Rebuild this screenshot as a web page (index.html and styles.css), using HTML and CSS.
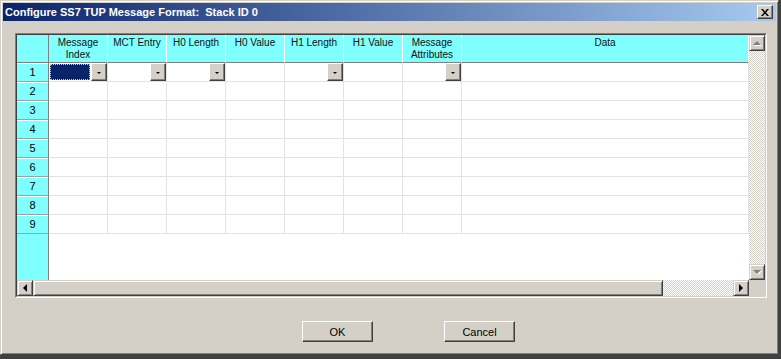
FILE: index.html
```html
<!DOCTYPE html>
<html lang="en">
<head>
    <meta charset="UTF-8">
    <title>Configure SS7 TUP Message Format</title>
    <link rel="stylesheet" href="styles.css">
</head>
<body>
    <div class="window">
        <div class="titlebar">
            <span class="title">Configure SS7 TUP Message Format:&nbsp; Stack ID 0</span>
            <div class="close-btn">
                <svg width="8" height="7" viewBox="0 0 8 7"><path d="M0 0h2l2 2.5L6 0h2L5 3.5 8 7H6L4 4.5 2 7H0l3-3.5z" fill="#000"/></svg>
            </div>
        </div>
        <div class="client">
            <div class="grid-frame">
                <div class="grid-main">
                    <div class="sheet">
                        <div class="hcell corner"></div>
                        <div class="hcell">Message<br>Index</div>
                        <div class="hcell">MCT Entry</div>
                        <div class="hcell">H0 Length</div>
                        <div class="hcell">H0 Value</div>
                        <div class="hcell">H1 Length</div>
                        <div class="hcell">H1 Value</div>
                        <div class="hcell">Message<br>Attributes</div>
                        <div class="hcell">Data</div>

                        <div class="rhead">1</div>
                        <div class="cell combo"><span class="selected"></span><span class="drop"></span></div>
                        <div class="cell combo"><span class="drop"></span></div>
                        <div class="cell combo"><span class="drop"></span></div>
                        <div class="cell"></div>
                        <div class="cell combo"><span class="drop"></span></div>
                        <div class="cell"></div>
                        <div class="cell combo"><span class="drop"></span></div>
                        <div class="cell"></div>

                        <div class="rhead">2</div>
                        <div class="cell"></div><div class="cell"></div><div class="cell"></div><div class="cell"></div>
                        <div class="cell"></div><div class="cell"></div><div class="cell"></div><div class="cell"></div>

                        <div class="rhead">3</div>
                        <div class="cell"></div><div class="cell"></div><div class="cell"></div><div class="cell"></div>
                        <div class="cell"></div><div class="cell"></div><div class="cell"></div><div class="cell"></div>

                        <div class="rhead">4</div>
                        <div class="cell"></div><div class="cell"></div><div class="cell"></div><div class="cell"></div>
                        <div class="cell"></div><div class="cell"></div><div class="cell"></div><div class="cell"></div>

                        <div class="rhead">5</div>
                        <div class="cell"></div><div class="cell"></div><div class="cell"></div><div class="cell"></div>
                        <div class="cell"></div><div class="cell"></div><div class="cell"></div><div class="cell"></div>

                        <div class="rhead">6</div>
                        <div class="cell"></div><div class="cell"></div><div class="cell"></div><div class="cell"></div>
                        <div class="cell"></div><div class="cell"></div><div class="cell"></div><div class="cell"></div>

                        <div class="rhead">7</div>
                        <div class="cell"></div><div class="cell"></div><div class="cell"></div><div class="cell"></div>
                        <div class="cell"></div><div class="cell"></div><div class="cell"></div><div class="cell"></div>

                        <div class="rhead">8</div>
                        <div class="cell"></div><div class="cell"></div><div class="cell"></div><div class="cell"></div>
                        <div class="cell"></div><div class="cell"></div><div class="cell"></div><div class="cell"></div>

                        <div class="rhead">9</div>
                        <div class="cell"></div><div class="cell"></div><div class="cell"></div><div class="cell"></div>
                        <div class="cell"></div><div class="cell"></div><div class="cell"></div><div class="cell"></div>

                        <div class="rhead filler"></div>
                        <div class="empty"></div>
                    </div>
                    <div class="vscroll">
                        <div class="sbtn"><span class="arrow up"></span></div>
                        <div class="track"></div>
                        <div class="sbtn"><span class="arrow down"></span></div>
                    </div>
                </div>
                <div class="hscroll">
                    <div class="sbtn"><span class="arrow left"></span></div>
                    <div class="thumb"></div>
                    <div class="track"></div>
                    <div class="sbtn"><span class="arrow right"></span></div>
                    <div class="sizer"></div>
                </div>
            </div>
            <div class="actions">
                <div class="btn">OK</div>
                <div class="btn">Cancel</div>
            </div>
        </div>
    </div>
</body>
</html>
```

FILE: styles.css
```css
body {
    margin: 0;
    background: #404040;
    font-family: 'Liberation Sans', Arial, sans-serif;
    font-size: 11px;
    color: #000;
}
.window {
    width: 779px;
    height: 355px;
    box-sizing: border-box;
    padding: 2px;
    background: #d4d0c8;
    border-top: 1px solid #d4d0c8;
    border-left: 1px solid #d4d0c8;
    border-right: 1px solid #404040;
    border-bottom: 1px solid #404040;
    box-shadow: inset 1px 1px #fff, inset -1px -1px #808080;
}
.titlebar {
    height: 18px;
    display: flex;
    align-items: center;
    justify-content: space-between;
    padding-left: 2px;
    background: linear-gradient(to right, #0a246a, #a6caf0);
}
.title {
    color: #fff;
    font-weight: bold;
    font-size: 11px;
    white-space: pre;
}
.close-btn {
    width: 14px;
    height: 12px;
    margin-right: 3px;
    display: flex;
    align-items: center;
    justify-content: center;
    background: #d4d0c8;
    border-top: 1px solid #fff;
    border-left: 1px solid #fff;
    border-right: 1px solid #404040;
    border-bottom: 1px solid #404040;
    box-shadow: inset -1px -1px #808080;
}
.client {
    padding: 12px 0 0 12px;
}
.grid-frame {
    width: 752px;
    box-sizing: border-box;
    border-top: 1px solid #808080;
    border-left: 1px solid #808080;
    border-right: 1px solid #fff;
    border-bottom: 1px solid #fff;
}
.grid-frame > * {
    border-left: 1px solid #404040;
}
.grid-main {
    display: flex;
    height: 245px;
    border-top: 1px solid #404040;
    border-right: 1px solid #d4d0c8;
}
.hscroll {
    display: flex;
    height: 16px;
    border-bottom: 1px solid #d4d0c8;
    border-right: 1px solid #d4d0c8;
}
.sheet {
    flex: 1;
    display: grid;
    grid-template-columns: 32px repeat(7, 59px) 1fr;
    grid-template-rows: 28px repeat(9, 19px) 1fr;
    background: #fff;
}
.hcell {
    background: #80ffff;
    border-right: 1px solid #fff;
    border-bottom: 1px solid #808080;
    text-align: center;
    font-size: 10px;
    line-height: 12px;
    padding-top: 2px;
    color: #101010;
}
.hcell.corner {
    border-right: 1px solid #808080;
}
.rhead {
    background: #80ffff;
    border-right: 1px solid #808080;
    border-bottom: 1px solid #a0a0a0;
    box-shadow: inset 0 1px #fff;
    text-align: center;
    line-height: 19px;
}
.rhead.filler {
    border-bottom: none;
    box-shadow: none;
}
.cell {
    border-right: 1px solid #e2e2e2;
    border-bottom: 1px solid #e2e2e2;
}
.cell:last-child {
    border-right: none;
}
.combo {
    display: flex;
    justify-content: flex-end;
}
.selected {
    flex: 1;
    margin: 1px;
    background: #0a246a;
    outline: 1px dotted #e8c860;
    outline-offset: -1px;
}
.drop {
    width: 16px;
    height: 18px;
    box-sizing: border-box;
    background: #d4d0c8;
    border-top: 1px solid #fff;
    border-left: 1px solid #fff;
    border-right: 1px solid #404040;
    border-bottom: 1px solid #404040;
    box-shadow: inset -1px -1px #808080;
    display: flex;
    align-items: center;
    justify-content: center;
}
.drop::after {
    content: "";
    border-left: 2px solid transparent;
    border-right: 2px solid transparent;
    border-top: 2px solid #000;
    margin-top: 1px;
}
.empty {
    grid-column: 2 / -1;
}
.vscroll {
    width: 16px;
    display: flex;
    flex-direction: column;
}
.track {
    flex: 1;
    background: repeating-conic-gradient(#fff 0 25%, #d4d0c8 0 50%) 0 0 / 2px 2px;
}
.sbtn {
    width: 16px;
    height: 16px;
    box-sizing: border-box;
    background: #d4d0c8;
    border-top: 1px solid #d4d0c8;
    border-left: 1px solid #d4d0c8;
    border-right: 1px solid #404040;
    border-bottom: 1px solid #404040;
    box-shadow: inset 1px 1px #fff, inset -1px -1px #808080;
    display: flex;
    align-items: center;
    justify-content: center;
}
.arrow {
    width: 0;
    height: 0;
}
.arrow.up {
    border-left: 4px solid transparent;
    border-right: 4px solid transparent;
    border-bottom: 4px solid #808080;
    filter: drop-shadow(1px 1px 0 #fff);
}
.arrow.down {
    border-left: 4px solid transparent;
    border-right: 4px solid transparent;
    border-top: 4px solid #808080;
    filter: drop-shadow(1px 1px 0 #fff);
}
.arrow.left {
    border-top: 4px solid transparent;
    border-bottom: 4px solid transparent;
    border-right: 4px solid #000;
}
.arrow.right {
    border-top: 4px solid transparent;
    border-bottom: 4px solid transparent;
    border-left: 4px solid #000;
}
.hscroll .thumb {
    width: 630px;
    box-sizing: border-box;
    background: #d4d0c8;
    border-top: 1px solid #d4d0c8;
    border-left: 1px solid #d4d0c8;
    border-right: 1px solid #404040;
    border-bottom: 1px solid #404040;
    box-shadow: inset 1px 1px #fff, inset -1px -1px #808080;
}
.hscroll .sizer {
    width: 16px;
    background: #d4d0c8;
}
.actions {
    display: flex;
    gap: 71px;
    margin-top: 23px;
    padding-left: 287px;
}
.btn {
    width: 71px;
    height: 21px;
    box-sizing: border-box;
    display: flex;
    align-items: center;
    justify-content: center;
    background: #d4d0c8;
    border-top: 1px solid #fff;
    border-left: 1px solid #fff;
    border-right: 1px solid #404040;
    border-bottom: 1px solid #404040;
    box-shadow: inset -1px -1px #808080;
}
```
